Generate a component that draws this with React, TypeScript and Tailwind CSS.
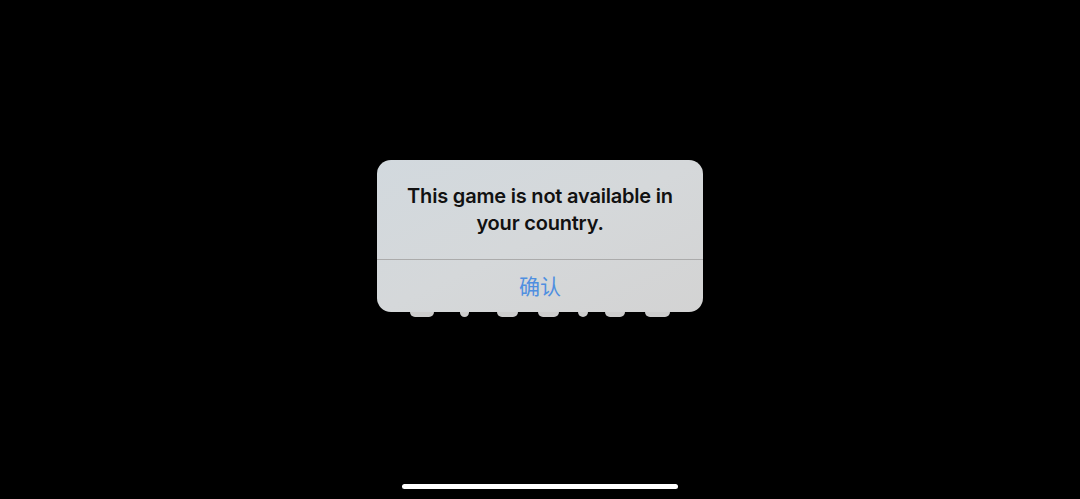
import React from 'react';

const bumps = [
    { left: 33, width: 24 },
    { left: 83, width: 9 },
    { left: 120, width: 21 },
    { left: 161, width: 21 },
    { left: 201, width: 10 },
    { left: 228, width: 20 },
    { left: 268, width: 25 },
];

const App: React.FC = () => {
    return (
        <div className="relative w-full h-[499px] bg-black flex flex-col items-center overflow-hidden" style={{ fontFamily: 'Inter, "Noto Sans CJK SC", sans-serif' }}>
            <div className="relative mt-[160px] w-[326px] h-[152px]">
                <div className="absolute bottom-[-5px] left-0 w-full h-[10px] blur-[0.5px]">
                    {bumps.map((b, i) => (
                        <div
                            key={i}
                            className="absolute top-0 h-[10px] rounded-full bg-[#cdcdcd]"
                            style={{ left: b.left, width: b.width }}
                        />
                    ))}
                </div>
                <div className="relative w-full h-full rounded-[14px] overflow-hidden flex flex-col bg-gradient-to-br from-[#d2d9de] via-[#d5d8da] to-[#d3d3d3]">
                    <div className="h-[99px] flex items-center justify-center px-4">
                        <p className="text-center text-[20px] leading-[27px] font-semibold text-[#111] tracking-[-0.2px]">
                            This game is not available in<br />your country.
                        </p>
                    </div>
                    <div className="h-px bg-[#ababab]" />
                    <div className="flex-1 flex items-center justify-center">
                        <span className="text-[21px] text-[#4f8fe0]" style={{ fontFamily: '"Noto Sans CJK SC", sans-serif' }}>确认</span>
                    </div>
                </div>
            </div>
            <div className="mt-auto mb-[10px] w-[276px] h-[5px] rounded-full bg-white" />
        </div>
    );
};

export default App;
